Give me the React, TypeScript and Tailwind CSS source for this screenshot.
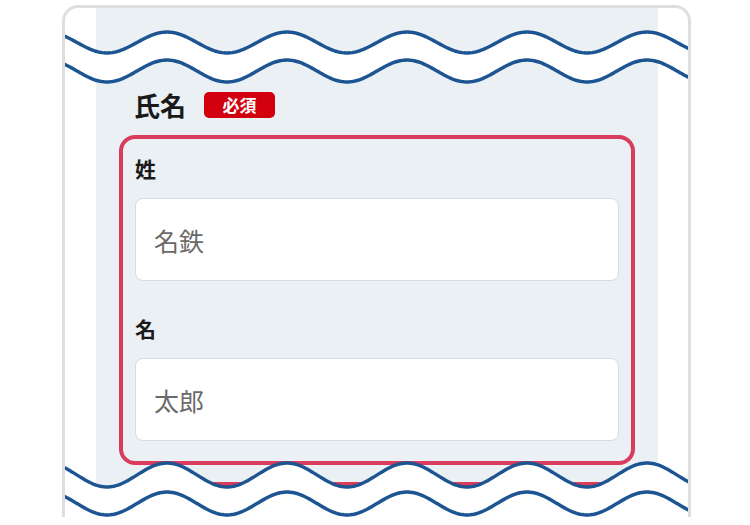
import React from "react";

const TROUGH_X = 107;
const WAVE_LEN = 120;

// sample a sine wave between x0 and x1 in page coordinates
const wavePts = (cy: number, amp: number) => {
  const pts: string[] = [];
  for (let x = 60; x <= 700; x += 2) {
    const y = cy + amp * Math.cos((2 * Math.PI * (x - TROUGH_X)) / WAVE_LEN);
    pts.push(`${x},${y.toFixed(2)}`);
  }
  return pts;
};

const TearOverlay = () => {
  const t1 = wavePts(42.5, 10.5);
  const t2 = wavePts(71, 11);
  const b1 = wavePts(475, 12);
  const b2 = wavePts(503.5, 11.5);
  const topFill = `M${t1.join("L")}L${[...t2].reverse().join("L")}Z`;
  const bottomFill = `M${b1.join("L")}L700,540L60,540Z`;
  const line = (pts: string[]) => `M${pts.join("L")}`;
  return (
    <svg
      className="absolute left-0 top-0 pointer-events-none"
      width={623}
      height={530}
      viewBox="65 8 623 530"
    >
      <path d={topFill} fill="#ffffff" />
      <path d={bottomFill} fill="#ffffff" />
      {[t1, t2, b1, b2].map((p, i) => (
        <path key={i} d={line(p)} fill="none" stroke="#1d5492" strokeWidth={3.5} />
      ))}
    </svg>
  );
};

const Field = ({ label, placeholder }: { label: string; placeholder: string }) => (
  <div>
    <p className="text-[21px] leading-[28px] font-bold text-[#1a1a1a]">{label}</p>
    <input
      className="mt-4 block w-full h-[83px] bg-white border border-[#d5dbe1] rounded-[8px] pl-[18px] text-[25px] text-[#333] placeholder:text-[#6a6a6a] outline-none"
      placeholder={placeholder}
    />
  </div>
);

export default function App() {
  return (
    <div className="w-[750px] h-[525px] bg-white font-['Noto_Sans_CJK_JP','Noto_Sans',sans-serif]">
      <div className="h-[517px] overflow-hidden pt-[5px] pl-[62px] w-[691px]">
        <div className="relative overflow-hidden w-[629px] border-[3px] border-[#dedede] rounded-[16px] bg-white pl-[31px] pr-[30px]">
          <div className="bg-[#ebf0f5] px-[23px] pt-[84px] pb-10">
            <div className="flex items-center pl-[15px] mb-[17px]">
              <span className="text-[26px] leading-[26px] font-bold text-[#1a1a1a]">氏名</span>
              <span className="ml-[18px] w-[71px] h-[26px] rounded-[5px] bg-[#d2000f] text-white text-[17px] font-bold flex items-center justify-center">
                必須
              </span>
            </div>
            <div className="border-4 border-[#da3d5c] rounded-[16px] px-3 pt-[15px] pb-5">
              <Field label="姓" placeholder="名鉄" />
              <div className="mt-[33px]">
                <Field label="名" placeholder="太郎" />
              </div>
            </div>
            <div className="mt-[17px] h-[160px] border-4 border-[#da3d5c] rounded-[16px]" />
          </div>
          <TearOverlay />
        </div>
      </div>
    </div>
  );
}
